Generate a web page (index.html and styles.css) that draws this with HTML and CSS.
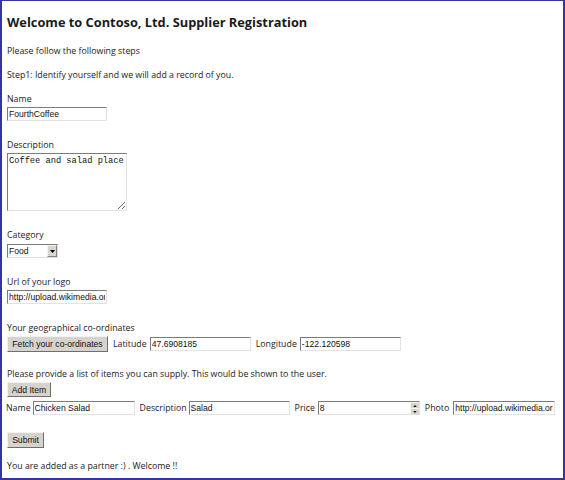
FILE: index.html
```html
<!DOCTYPE html>
<html>
<head>
<meta charset="utf-8">
<title>Supplier Registration</title>
<link rel="stylesheet" href="styles.css">
</head>
<body>
<div class="frame">
  <h1 class="title">Welcome to Contoso, Ltd. Supplier Registration</h1>
  <p class="text intro">Please follow the following steps</p>
  <p class="text step">Step1: Identify yourself and we will add a record of you.</p>

  <div class="field first">
    <label class="text label">Name</label>
    <input class="box w100" type="text" value="FourthCoffee">
  </div>

  <div class="field">
    <label class="text label">Description</label>
    <textarea class="box area">Coffee and salad place</textarea>
  </div>

  <div class="field">
    <label class="text label">Category</label>
    <div class="select">
      <select class="select-input"><option>Food</option></select>
      <span class="drop"><svg width="5" height="3" viewBox="0 0 5 3"><path d="M0 0H5L2.5 3Z" fill="#000"/></svg></span>
    </div>
  </div>

  <div class="field">
    <label class="text label">Url of your logo</label>
    <input class="box w100" type="text" value="http://upload.wikimedia.org/wikipedia/commons/logo.png">
  </div>

  <div class="field">
    <label class="text label">Your geographical co-ordinates</label>
    <div class="row">
      <button class="btn fetch">Fetch your co-ordinates</button>
      <span class="text inl lat">Latitude</span>
      <input class="box w101" type="text" value="47.6908185">
      <span class="text inl lon">Longitude</span>
      <input class="box w101" type="text" value="-122.120598">
    </div>
  </div>

  <div class="field list">
    <label class="text label">Please provide a list of items you can supply. This would be shown to the user.</label>
    <div class="row"><button class="btn add">Add Item</button></div>
    <div class="row items">
      <span class="text inl iname">Name</span>
      <input class="box w102" type="text" value="Chicken Salad">
      <span class="text inl idesc">Description</span>
      <input class="box w101" type="text" value="Salad">
      <span class="text inl iprice">Price</span>
      <div class="number">
        <input class="num-input" type="text" value="8">
        <span class="spin">
          <span class="spin-btn"><svg width="5" height="3" viewBox="0 0 5 3"><path d="M0 3H5L2.5 0Z" fill="#000"/></svg></span>
          <span class="spin-btn"><svg width="5" height="3" viewBox="0 0 5 3"><path d="M0 0H5L2.5 3Z" fill="#000"/></svg></span>
        </span>
      </div>
      <span class="text inl iphoto">Photo</span>
      <input class="box w102" type="text" value="http://upload.wikimedia.org/wikipedia/commons/salad.jpg">
    </div>
  </div>

  <div class="row submit-row">
    <button class="btn submit">Submit</button>
  </div>

  <p class="text done">You are added as a partner :) . Welcome !!</p>
</div>
</body>
</html>
```

FILE: styles.css
```css
* { box-sizing: border-box; }
html, body { margin: 0; padding: 0; background: #fff; }

.frame {
  width: 565px;
  height: 480px;
  border-style: solid;
  border-color: #3434a4;
  border-width: 1px 2px 2px 2px;
  padding: 12px 0 0 5px;
  font-family: "Open Sans", "Noto Sans", sans-serif;
  color: #222;
  overflow: hidden;
}

.title {
  margin: 0;
  font-size: 12.8px;
  line-height: 18px;
  font-weight: 700;
  color: #1a1a1a;
}

.text {
  font-size: 8.8px;
  line-height: 12px;
  white-space: nowrap;
}

p.text { margin: 0; }
.intro { margin-top: 14px !important; }
.step { margin-top: 12px !important; }

.field {
  display: flex;
  flex-direction: column;
  align-items: flex-start;
  margin-top: 18px;
}
.field.first { margin-top: 12px; }
.field.list { margin-top: 16px; }

.label { display: block; margin-bottom: 2px; }

.box {
  display: block;
  height: 14px;
  padding: 0 1px;
  margin: 0;
  border-style: solid;
  border-width: 1px;
  border-color: #7c7c7c #e2e2e2 #e2e2e2 #7c7c7c;
  background: #fff;
  font-family: "Liberation Sans", Arial, sans-serif;
  font-size: 8.6px;
  color: #111;
  outline: none;
}
.w100 { width: 100px; }
.w101 { width: 101px; }
.w102 { width: 102px; }

.area {
  width: 120px;
  height: 58px;
  padding: 2px 1px;
  resize: vertical;
  overflow: hidden;
  font-family: "Liberation Mono", "Courier New", monospace;
  font-size: 8.7px;
  line-height: 11px;
}

.select {
  display: flex;
  align-items: stretch;
  width: 51px;
  height: 14px;
  margin-top: 1px;
  border-style: solid;
  border-width: 1px;
  border-color: #7c7c7c #e2e2e2 #e2e2e2 #7c7c7c;
  background: #fff;
}
.select-input {
  appearance: none;
  -webkit-appearance: none;
  border: none;
  outline: none;
  background: transparent;
  flex: 1;
  min-width: 0;
  padding: 0 1px;
  margin: 0;
  height: 12px;
  font-family: "Liberation Sans", Arial, sans-serif;
  font-size: 8.6px;
  color: #111;
}
.drop {
  width: 10px;
  display: flex;
  align-items: center;
  justify-content: center;
  background: #d8d5ce;
  border-style: solid;
  border-width: 1px;
  border-color: #f4f4f4 #808080 #808080 #f4f4f4;
}

.row {
  display: flex;
  align-items: center;
}

.btn {
  margin: 0;
  padding: 0 2px;
  height: 16px;
  background: #d6d3cc;
  border-style: solid;
  border-width: 1px;
  border-color: #f2f2f2 #6e6e6e #6e6e6e #f2f2f2;
  font-family: "Liberation Sans", Arial, sans-serif;
  font-size: 8.6px;
  color: #111;
  line-height: 14px;
  white-space: nowrap;
}
.fetch { width: 101px; }
.add { width: 44px; height: 15px; }
.submit { width: 37px; }

.inl { margin: 0 3px 0 5px; }
.lon { margin-right: 3px; }

.items { margin-top: 4px; margin-left: -1px; }
.iname { margin-left: 0; margin-right: 2px; }
.idesc { margin-left: 5px; margin-right: 2px; }
.iprice { margin-left: 5px; margin-right: 3px; }
.iphoto { margin-left: 5px; margin-right: 4px; }

.number {
  display: flex;
  align-items: stretch;
  width: 102px;
  height: 14px;
  border-style: solid;
  border-width: 1px;
  border-color: #7c7c7c #e2e2e2 #e2e2e2 #7c7c7c;
  background: #fff;
}
.num-input {
  flex: 1;
  min-width: 0;
  border: none;
  outline: none;
  padding: 0 1px;
  margin: 0;
  background: transparent;
  font-family: "Liberation Sans", Arial, sans-serif;
  font-size: 8.6px;
  color: #111;
  height: 12px;
}
.spin {
  width: 9px;
  display: flex;
  flex-direction: column;
}
.spin-btn {
  flex: 1;
  display: flex;
  align-items: center;
  justify-content: center;
  background: #d8d5ce;
  border-style: solid;
  border-width: 1px 0 0 1px;
  border-color: #f4f4f4 #808080 #808080 #f4f4f4;
}
.spin-btn svg { width: 4px; height: 2px; }

.submit-row { margin-top: 17px; }
.done { margin-top: 12px !important; }
```
